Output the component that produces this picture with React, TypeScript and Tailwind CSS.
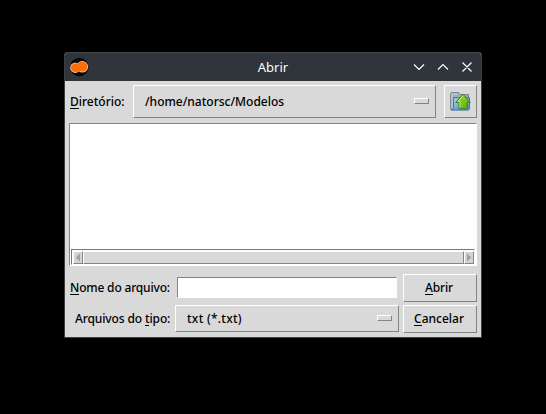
import type { ReactNode } from "react";

const raised = "border border-t-white border-l-white border-b-[#858585] border-r-[#858585]";

function Mnemonic({ children }: { children: ReactNode }) {
  return <span className="inline-block h-[16px] border-b border-black leading-[17px]">{children}</span>;
}

function Indicator() {
  return <span className={`mb-px h-[6px] w-[15px] shrink-0 ${raised} bg-[#d9d9d9]`} />;
}

function Arrow({ right = false }: { right?: boolean }) {
  return (
    <span className={`flex h-[13px] w-[10px] shrink-0 items-center justify-center ${raised} bg-[#d4d4d4]`}>
      <svg width="6" height="9" viewBox="0 0 6 9">
        <path d={right ? "M1 0.5L5.3 4.5L1 8.5Z" : "M5 0.5L0.7 4.5L5 8.5Z"} fill="#a0a0a0" />
      </svg>
    </span>
  );
}

function AppLogo() {
  return (
    <svg width="20" height="20" viewBox="0 0 20 20">
      <circle cx="10.3" cy="10" r="9.2" fill="#080808" />
      <g fill="#ffc795">
        <circle cx="6.3" cy="10.8" r="5.1" />
        <circle cx="13.3" cy="9.8" r="5.8" />
      </g>
      <g fill="#ff6c0c">
        <circle cx="6.3" cy="10.8" r="4.3" />
        <circle cx="13.3" cy="9.8" r="5" />
        <path d="M6 7l5-1v9l-5-.5z" />
      </g>
    </svg>
  );
}

function FolderUp() {
  return (
    <svg width="21" height="19" viewBox="0 0 21 19">
      <defs>
        <linearGradient id="folder" x2="0.7" y2="1">
          <stop stopColor="#b4d2ed" />
          <stop offset="1" stopColor="#5b94d0" />
        </linearGradient>
        <linearGradient id="arrow" x2="1" y2="1">
          <stop stopColor="#a5e02e" />
          <stop offset="1" stopColor="#55a915" />
        </linearGradient>
      </defs>
      <path d="M.7 17.5V1.5L1.7.6h7l1.5 2h8.3v15z" fill="#a2aeb7" stroke="#71818d" />
      <path d="M2 16V2h5.5" stroke="#cbd5dc" fill="none" />
      <path d="M3.5 5.7h16v10.8l-1 1.6h-17l2-1.6z" fill="url(#folder)" stroke="#3973b2" />
      <path d="M13 2.2l7.3 8.2h-3.1v6.3H9v-6.3H5.7z" fill="url(#arrow)" stroke="#39820b" />
      <path d="M13 3.8L7.9 9.5h2v6.2" fill="none" stroke="#cdf481" strokeWidth="0.8" />
    </svg>
  );
}

export default function App() {
  return (
    <div className="h-[414px] w-[546px] overflow-hidden bg-black pt-[52px] pl-[64px] font-['Noto_Sans',sans-serif] text-[12px] font-medium leading-[17px] text-black">
      <div className="flex h-[286px] w-[418px] flex-col overflow-hidden rounded-t-[4px] border-r border-b border-l border-[#3c4043] bg-[#d9d9d9]">
        <header className="flex h-[29px] shrink-0 items-center justify-between border-t border-[#42494e] bg-[#2f353a] pr-[8px] pl-[4px] text-[13px] font-normal text-[#fcfcfc]">
          <div className="w-[62px]"><AppLogo /></div>
          <span className="pl-[4px]">Abrir</span>
          <svg width="62" height="14" viewBox="0 0 62 14" fill="none" stroke="#fcfcfc" strokeWidth="1.2">
            <path d="M3 4.5l5 5 5-5M27 9.5l5-5 5 5M51.5 2.5l9 9M60.5 2.5l-9 9" />
          </svg>
        </header>
        <main className="flex flex-col pt-[4px] pr-[4px] pl-[4px]">
          <div className="flex h-[33px] items-center">
            <label className="w-[64px] pl-px whitespace-nowrap"><Mnemonic>D</Mnemonic>iretório:</label>
            <div className={`flex h-[33px] w-[303px] items-center justify-between pr-[6px] pl-[11px] ${raised}`}>
              <span>/home/natorsc/Modelos</span>
              <Indicator />
            </div>
            <button className={`ml-[8px] flex h-[33px] w-[33px] items-center justify-center ${raised}`}>
              <FolderUp />
            </button>
          </div>
          <div className="mt-[5px] flex h-[143px] w-[408px] flex-col border-t border-r border-b border-l border-t-[#858585] border-r-white border-b-white border-l-[#858585] bg-white">
            <div className="grow" />
            <div className="mr-px ml-px flex h-[16px] shrink-0 border border-t-[#777777] border-r-white border-b-white border-l-[#777777] bg-white pt-px pl-px">
              <Arrow />
              <div className={`h-[13px] grow ${raised} bg-[#d9d9d9]`} />
              <Arrow right />
            </div>
          </div>
          <div className="mt-[8px] flex h-[28px] items-start">
            <label className="w-[108px] pt-[5px] pl-px tracking-[-0.18px] whitespace-nowrap"><Mnemonic>N</Mnemonic>ome do arquivo:</label>
            <div className="mt-[3px] h-[21px] w-[220px] border border-t-[#858585] border-r-white border-b-white border-l-[#858585] bg-white" />
            <button className={`ml-[6px] flex h-[28px] w-[74px] items-start justify-center pt-[4px] pr-[2px] tracking-[-0.1px] ${raised}`}><Mnemonic>A</Mnemonic>brir</button>
          </div>
          <div className="mt-[3px] flex h-[28px] items-start">
            <label className="w-[106px] pt-[5px] pl-[6px] tracking-[-0.12px] whitespace-nowrap">Arquivos do <Mnemonic>t</Mnemonic>ipo:</label>
            <div className={`flex h-[27px] w-[224px] items-center justify-between pr-[6px] pl-[11px] ${raised}`}>
              <span className="tracking-[0.27px]">txt (*.txt)</span>
              <Indicator />
            </div>
            <button className={`ml-[4px] flex h-[28px] w-[74px] items-start justify-center pt-[4px] pr-[2px] ${raised}`}><Mnemonic>C</Mnemonic>ancelar</button>
          </div>
        </main>
      </div>
    </div>
  );
}
